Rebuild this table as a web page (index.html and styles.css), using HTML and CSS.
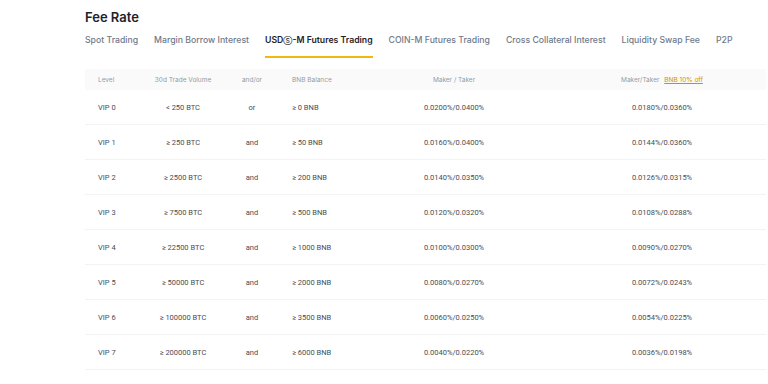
FILE: index.html
```html
<!DOCTYPE html>
<html lang="en">
<head>
  <meta charset="UTF-8">
  <meta name="viewport" content="width=device-width, initial-scale=1.0">
  <title>Fee Rate</title>
  <link rel="stylesheet" href="styles.css">
</head>
<body>
  <div class="page">
    <h1>Fee Rate</h1>

    <div class="tabs">
      <div class="tab">Spot Trading</div>
      <div class="tab">Margin Borrow Interest</div>
      <div class="tab active">USD<span class="s-mark">Ⓢ</span>-M Futures Trading</div>
      <div class="tab">COIN-M Futures Trading</div>
      <div class="tab">Cross Collateral Interest</div>
      <div class="tab">Liquidity Swap Fee</div>
      <div class="tab">P2P</div>
    </div>

    <div class="fee-table">
      <div class="row head">
        <div class="cell level">Level</div>
        <div class="cell center">30d Trade Volume</div>
        <div class="cell center">and/or</div>
        <div class="cell bnb">BNB Balance</div>
        <div class="cell center">Maker / Taker</div>
        <div class="cell center">Maker/Taker <span class="off">BNB 10% off</span></div>
      </div>
      <div id="rows"></div>
    </div>
  </div>

  <script>
    const tiers = [
      ['VIP 0', '< 250 BTC', 'or', '≥ 0 BNB', '0.0200%/0.0400%', '0.0180%/0.0360%'],
      ['VIP 1', '≥ 250 BTC', 'and', '≥ 50 BNB', '0.0160%/0.0400%', '0.0144%/0.0360%'],
      ['VIP 2', '≥ 2500 BTC', 'and', '≥ 200 BNB', '0.0140%/0.0350%', '0.0126%/0.0315%'],
      ['VIP 3', '≥ 7500 BTC', 'and', '≥ 500 BNB', '0.0120%/0.0320%', '0.0108%/0.0288%'],
      ['VIP 4', '≥ 22500 BTC', 'and', '≥ 1000 BNB', '0.0100%/0.0300%', '0.0090%/0.0270%'],
      ['VIP 5', '≥ 50000 BTC', 'and', '≥ 2000 BNB', '0.0080%/0.0270%', '0.0072%/0.0243%'],
      ['VIP 6', '≥ 100000 BTC', 'and', '≥ 3500 BNB', '0.0060%/0.0250%', '0.0054%/0.0225%'],
      ['VIP 7', '≥ 200000 BTC', 'and', '≥ 6000 BNB', '0.0040%/0.0220%', '0.0036%/0.0198%'],
      ['VIP 8', '≥ 400000 BTC', 'and', '≥ 9000 BNB', '0.0020%/0.0200%', '0.0018%/0.0180%']
    ];
    const kinds = ['level', 'center', 'center', 'bnb', 'center', 'center'];
    const rows = document.getElementById('rows');

    tiers.forEach(t => {
      const row = document.createElement('div');
      row.className = 'row';
      t.forEach((v, i) => {
        const cell = document.createElement('div');
        cell.className = 'cell ' + kinds[i];
        cell.textContent = v;
        row.appendChild(cell);
      });
      rows.appendChild(row);
    });
  </script>
</body>
</html>
```

FILE: styles.css
```css
:root {
  --text: #1e2329;
  --muted: #707a8a;
  --cell: #474d57;
  --head: #929aa5;
  --yellow: #f0b90b;
  --gold: #c99400;
  --line: #f3f3f3;
}

body {
  margin: 0;
  background: #fff;
  font-family: Inter, "Noto Sans", sans-serif;
  color: var(--text);
  overflow: hidden;
}

.page {
  padding: 7px 0 0 85px;
}

h1 {
  margin: 0;
  font-size: 13px;
  line-height: 20px;
  font-weight: 600;
}

.tabs {
  display: flex;
  gap: 16px;
  margin-top: 6px;
}

.tab {
  font-size: 8.7px;
  line-height: 15px;
  font-weight: 500;
  color: var(--muted);
  padding-bottom: 7px;
  border-bottom: 2px solid transparent;
  white-space: nowrap;
}

.tab.active {
  color: var(--text);
  font-weight: 600;
  border-bottom-color: var(--yellow);
}

.s-mark {
  font-size: 6.5px;
  font-weight: 500;
}

.fee-table {
  margin-top: 11px;
  width: 681px;
}

.row {
  display: grid;
  grid-template-columns: 50px 96px 42px 77px 208px 208px;
  align-items: center;
  height: 35px;
  border-bottom: 1px solid var(--line);
  box-sizing: border-box;
  font-family: Roboto, "Noto Sans", sans-serif;
  font-size: 7.5px;
  color: var(--cell);
}

.row.head {
  height: 21px;
  background: #fafafa;
  border-bottom: none;
  font-family: Inter, "Noto Sans", sans-serif;
  font-size: 6.5px;
  color: var(--head);
}

.cell {
  white-space: nowrap;
}

.cell.level {
  padding-left: 13px;
}

.cell.center {
  text-align: center;
}

.cell.bnb {
  padding-left: 19px;
}

.off {
  margin-left: 3px;
  color: var(--gold);
  text-decoration: underline;
}
```
